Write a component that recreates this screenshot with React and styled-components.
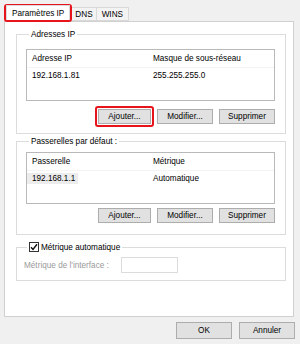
import React from "react";
import styled, { createGlobalStyle } from "styled-components";

const GlobalStyle = createGlobalStyle`
  html, body {
    margin: 0;
    padding: 0;
    background: #f0f0f0;
  }
  body {
    font-family: "Liberation Sans", Arial, sans-serif;
    font-size: 8.2px;
    color: #000;
  }
`;

const Dialog = styled.div`
  width: 300px;
  height: 344px;
  box-sizing: border-box;
  padding: 3px 0 0 4px;
  display: flex;
  flex-direction: column;
`;

const TabStrip = styled.div`
  display: flex;
  align-items: flex-end;
  height: 18px;
`;

const Highlight = styled.div`
  border: 2px solid #e8141c;
  border-radius: 3px;
  display: flex;
  align-items: flex-end;
  height: 14px;
  margin-bottom: -1px;
  position: relative;
  z-index: 2;
`;

const Tab = styled.div`
  box-sizing: border-box;
  height: ${(p) => (p.$active ? "15px" : "14px")};
  padding: 0 ${(p) => (p.$pad || 5)}px;
  display: flex;
  align-items: center;
  background: ${(p) => (p.$active ? "#fff" : "#f3f3f3")};
  border: 1px solid #d9d9d9;
  border-bottom: ${(p) => (p.$active ? "none" : "1px solid #d9d9d9")};
  margin-left: ${(p) => (p.$first ? "0" : "-1px")};
`;

const Panel = styled.div`
  box-sizing: border-box;
  width: 290px;
  height: 296px;
  background: #fff;
  border: 1px solid #d0d0d0;
  padding: 8px 7px 0 11px;
  display: flex;
  flex-direction: column;
`;

const Group = styled.fieldset`
  box-sizing: border-box;
  margin: ${(p) => p.$mt || 0}px 0 0 0;
  width: 270px;
  border: 1px solid #dcdcdc;
  padding: ${(p) => p.$pad || "10px 10px 9px 9px"};
  min-width: 0;
`;

const Legend = styled.legend`
  padding: 0 2px;
  margin-left: 3px;
  display: flex;
  align-items: center;
  gap: 2px;
`;

const List = styled.div`
  box-sizing: border-box;
  height: 52px;
  border: 1px solid #b9b9b9;
  background: #fff;
`;

const HeaderRow = styled.div`
  display: grid;
  grid-template-columns: 121px 1fr;
  height: 17px;
  align-items: center;
  padding-left: 5px;
  border-bottom: 1px solid #f4f4f4;
`;

const Row = styled.div`
  display: grid;
  grid-template-columns: 121px 1fr;
  height: 12px;
  margin-top: 1px;
  align-items: center;
`;

const Cell = styled.span`
  padding-left: 5px;
  justify-self: start;
  padding-right: 3px;
  background: ${(p) => (p.$selected ? "#ececec" : "transparent")};
  line-height: 11px;
`;

const ButtonRow = styled.div`
  display: flex;
  justify-content: flex-end;
  gap: 6px;
  margin-top: ${(p) => p.$mt || 8}px;
`;

const Button = styled.button`
  box-sizing: border-box;
  width: ${(p) => p.$w || 56}px;
  height: ${(p) => p.$h || 15}px;
  padding: 0;
  font: inherit;
  color: #000;
  background: #e1e1e1;
  border: 1px solid #adadad;
  border-radius: 0;
`;

const ButtonMark = styled.div`
  border: 2px solid #e8141c;
  border-radius: 3px;
  padding: 1px;
  margin: -3px -3px -3px 0;
  display: flex;
`;

const CheckBox = styled.span`
  box-sizing: border-box;
  width: 10px;
  height: 10px;
  border: 1px solid #333;
  background: #fff;
  display: flex;
  align-items: center;
  justify-content: center;
`;

const FieldRow = styled.div`
  display: flex;
  align-items: center;
`;

const Muted = styled.span`
  color: #9a9a9a;
  width: 97px;
`;

const Input = styled.div`
  box-sizing: border-box;
  width: 57px;
  height: 16px;
  border: 1px solid #dcdcdc;
  background: #fff;
`;

const Footer = styled.div`
  display: flex;
  justify-content: flex-end;
  gap: 7px;
  padding: 5px 5px 0 0;
`;

const App = () => {
  return (
    <>
      <GlobalStyle />
      <Dialog>
        <TabStrip>
          <Highlight>
            <Tab $active $first $pad={5}>
              Paramètres IP
            </Tab>
          </Highlight>
          <Tab $pad={3}>DNS</Tab>
          <Tab $pad={5}>WINS</Tab>
        </TabStrip>
        <Panel>
          <Group>
            <Legend>Adresses IP</Legend>
            <List>
              <HeaderRow>
                <span>Adresse IP</span>
                <span>Masque de sous-réseau</span>
              </HeaderRow>
              <Row>
                <Cell>192.168.1.81</Cell>
                <Cell>255.255.255.0</Cell>
              </Row>
            </List>
            <ButtonRow>
              <ButtonMark>
                <Button $w={53}>Ajouter...</Button>
              </ButtonMark>
              <Button>Modifier...</Button>
              <Button>Supprimer</Button>
            </ButtonRow>
          </Group>
          <Group $mt={3} $pad="6px 10px 11px 9px">
            <Legend>Passerelles par défaut :</Legend>
            <List>
              <HeaderRow>
                <span>Passerelle</span>
                <span>Métrique</span>
              </HeaderRow>
              <Row>
                <Cell $selected>192.168.1.1</Cell>
                <Cell>Automatique</Cell>
              </Row>
            </List>
            <ButtonRow $mt={4}>
              <Button $w={53}>Ajouter...</Button>
              <Button>Modifier...</Button>
              <Button>Supprimer</Button>
            </ButtonRow>
          </Group>
          <Group $mt={7} $pad="5px 10px 7px 7px">
            <Legend>
              <CheckBox>
                <svg width="8" height="8" viewBox="0 0 8 8">
                  <path
                    d="M1 4.2 L3 6.4 L7 1.2"
                    fill="none"
                    stroke="#111"
                    strokeWidth="1.4"
                  />
                </svg>
              </CheckBox>
              Métrique automatique
            </Legend>
            <FieldRow>
              <Muted>Métrique de l'interface :</Muted>
              <Input />
            </FieldRow>
          </Group>
        </Panel>
        <Footer>
          <Button $h={17}>OK</Button>
          <Button $h={17}>Annuler</Button>
        </Footer>
      </Dialog>
    </>
  );
};

export default App;
